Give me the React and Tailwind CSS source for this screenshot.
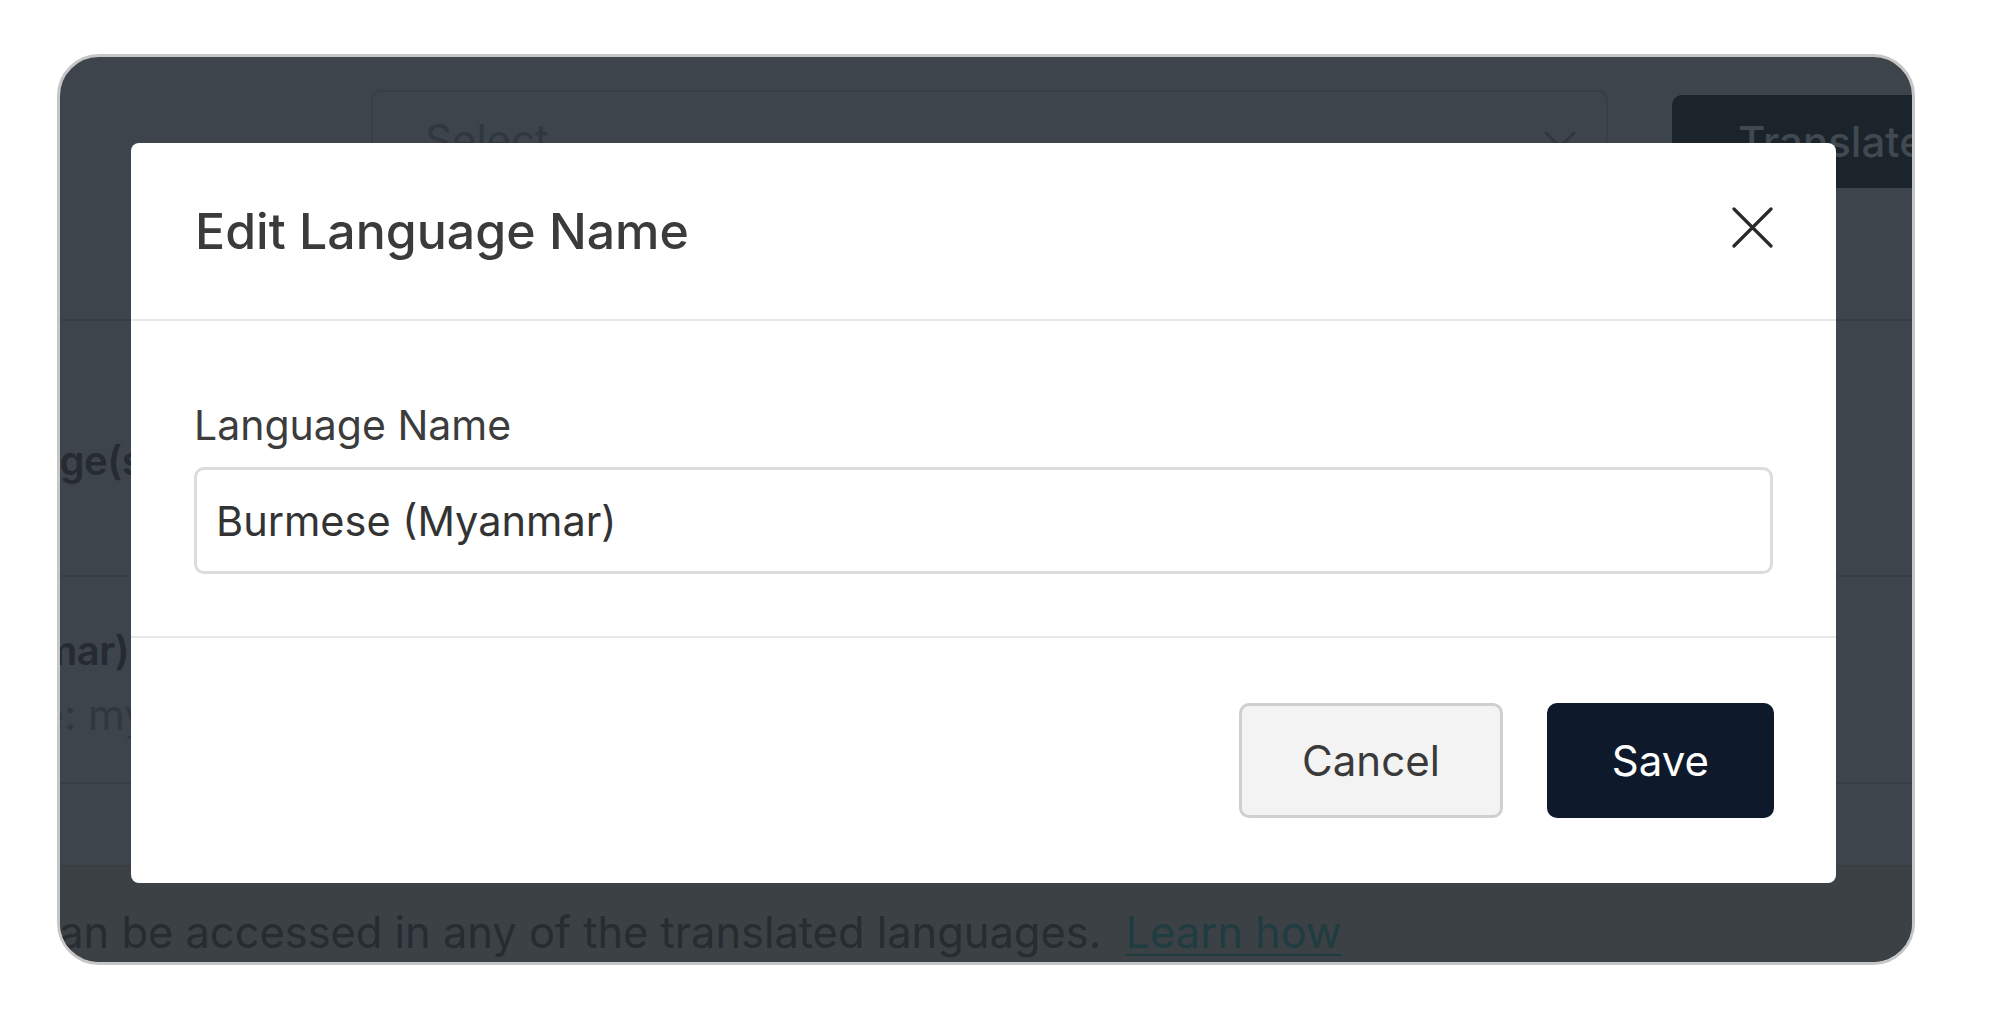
import React, { useState } from 'react';

const CloseIcon = () => (
  <svg width="41" height="41" viewBox="0 0 41 41" fill="none">
    <path d="M2 2L39 39M39 2L2 39" stroke="#2a2a2a" strokeWidth="3.2" strokeLinecap="round" />
  </svg>
);

const Chevron = () => (
  <svg width="32" height="18" viewBox="0 0 32 18" fill="none">
    <path d="M2 2L16 16L30 2" stroke="#30373e" strokeWidth="3" strokeLinecap="round" strokeLinejoin="round" />
  </svg>
);

const App = () => {
  const [name, setName] = useState('Burmese (Myanmar)');

  return (
    <div className="min-h-screen bg-white font-['Inter',sans-serif] pt-[54px] pl-[57px]">
      {/* Page frame, dimmed behind the dialog */}
      <div className="relative w-[1858px] h-[911px] rounded-[42px] border-[3px] border-[#c6c6c6] bg-[#3d444b] overflow-hidden">
        {/* Top toolbar */}
        <div className="h-[264px] border-b-2 border-[#373e45] flex items-start pt-[33px]">
          <div className="ml-[311px] w-[1237px] h-[100px] shrink-0 rounded-[10px] border-2 border-[#373e45] flex items-center justify-between pl-[52px] pr-[30px]">
            <span className="text-[42px] leading-[50px] text-[#30373e]">Select</span>
            <Chevron />
          </div>
          <div className="ml-[64px] mt-[5px] h-[93px] w-[400px] shrink-0 rounded-[10px] bg-[#1b232b] flex items-center pl-[66px]">
            <span className="text-[42px] leading-[50px] font-medium text-[#414950]">Translate</span>
          </div>
        </div>

        {/* Heading row */}
        <div className="h-[256px] border-b-2 border-[#373e45] pt-[115px]">
          <div className="ml-[-140px] text-[40px] leading-[50px] font-semibold tracking-[-0.5px] text-[#252b31] whitespace-nowrap">Language(s)</div>
        </div>

        {/* Language row */}
        <div className="h-[207px] border-b-2 border-[#373e45] pt-[49px]">
          <div className="ml-[-318px] text-[40px] leading-[50px] font-semibold tracking-[-0.5px] text-[#252b31] whitespace-nowrap">Burmese (Myanmar)</div>
          <div className="ml-[-102px] mt-[14px] text-[42px] leading-[50px] text-[#30373e] whitespace-nowrap">Code: my</div>
        </div>

        <div className="h-[83px] border-b-2 border-[#383e43]"></div>

        {/* Info band */}
        <div className="h-full bg-[#3b4145] pt-[40px]">
          <p className="ml-[-26px] text-[43.4px] leading-[50px] text-[#262c31] whitespace-nowrap">
            can be accessed in any of the translated languages.{'\u00a0\u00a0'}
            <span className="underline decoration-2 underline-offset-[6px] text-[#1f3d40]">Learn how</span>
          </p>
        </div>

        {/* Edit dialog */}
        <div className="absolute left-[71px] top-[86px] w-[1705px] h-[740px] bg-white rounded-[8px] flex flex-col">
          <div className="h-[178px] shrink-0 flex items-center justify-between pl-[64px] pr-[63px] border-b-2 border-[#e8e8e8]">
            <h3 className="text-[50px] leading-[60px] font-medium text-[#3b3b3b]">Edit Language Name</h3>
            <button className="mt-[-8px]">
              <CloseIcon />
            </button>
          </div>

          <div className="pt-[79px] pb-[62px] px-[63px] border-b-2 border-[#e8e8e8] flex flex-col gap-[17px]">
            <label className="text-[41px] leading-[50px] text-[#3c3c3c]">Language Name</label>
            <input
              type="text"
              value={name}
              onChange={(e) => setName(e.target.value)}
              className="w-full h-[107px] rounded-[10px] border-[3px] border-[#dcdcdc] px-[19px] text-[41.5px] text-[#333333] focus:outline-none"
            />
          </div>

          <div className="flex-1 flex items-center justify-end gap-[44px] pr-[62px]">
            <button className="h-[115px] px-[60px] rounded-[10px] border-[3px] border-[#cfcfcf] bg-[#f3f3f3] text-[42px] text-[#3a3a3a]">
              Cancel
            </button>
            <button className="h-[115px] px-[65px] rounded-[10px] bg-[#0e1a2b] text-[42px] text-white">
              Save
            </button>
          </div>
        </div>
      </div>
    </div>
  );
};

export default App;
